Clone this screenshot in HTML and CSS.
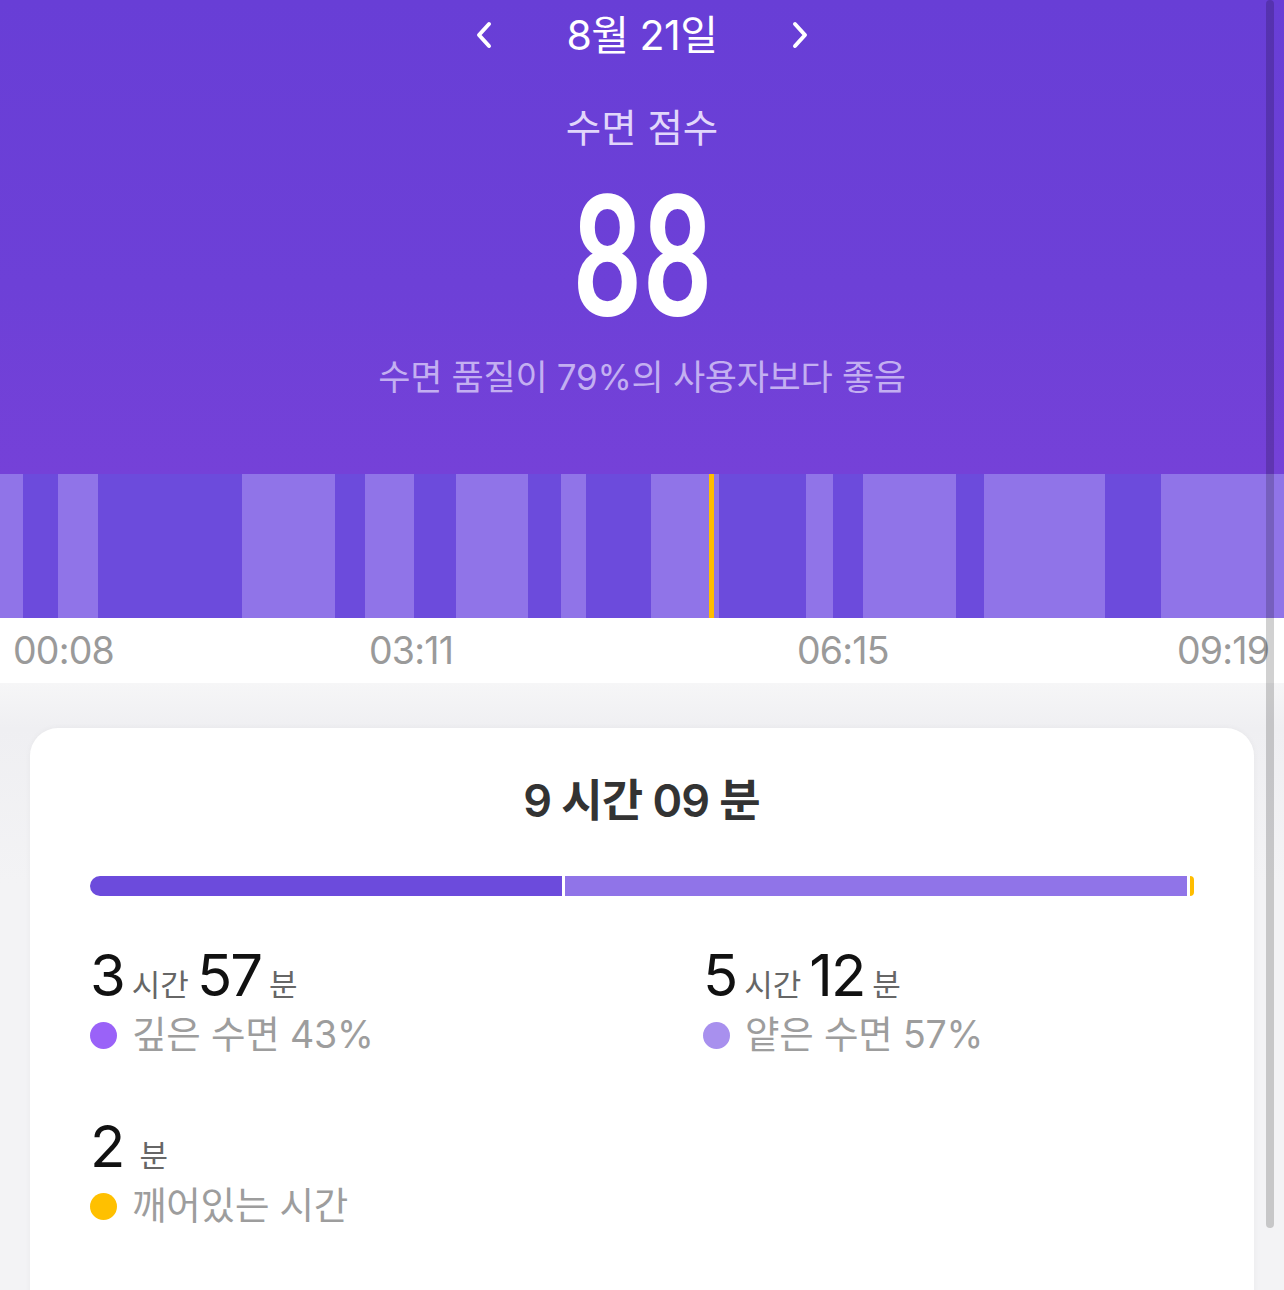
FILE: index.html
```html
<!DOCTYPE html>
<html lang="ko">
<head>
<meta charset="utf-8">
<title>수면</title>
<link rel="stylesheet" href="styles.css">
</head>
<body>
<div class="page">
  <header class="hero">
    <nav class="datebar">
      <svg class="chev" viewBox="0 0 16 28" width="16" height="28"><polyline points="13,3 3,14 13,25" /></svg>
      <span class="date">8월 21일</span>
      <svg class="chev" viewBox="0 0 16 28" width="16" height="28"><polyline points="3,3 13,14 3,25" /></svg>
    </nav>
    <div class="score-label">수면 점수</div>
    <div class="score"><span class="score-num">88</span></div>
    <div class="score-sub">수면 품질이 79%의 사용자보다 좋음</div>
  </header>

  <div class="strip">
    <span class="seg light" style="width:23px"></span>
    <span class="seg deep" style="width:35px"></span>
    <span class="seg light" style="width:40px"></span>
    <span class="seg deep" style="width:144px"></span>
    <span class="seg light" style="width:93px"></span>
    <span class="seg deep" style="width:30px"></span>
    <span class="seg light" style="width:49px"></span>
    <span class="seg deep" style="width:42px"></span>
    <span class="seg light" style="width:72px"></span>
    <span class="seg deep" style="width:33px"></span>
    <span class="seg light" style="width:25px"></span>
    <span class="seg deep" style="width:65px"></span>
    <span class="seg light" style="width:58px"></span>
    <span class="seg awake" style="width:5px"></span>
    <span class="seg light" style="width:5px"></span>
    <span class="seg deep" style="width:87px"></span>
    <span class="seg light" style="width:27px"></span>
    <span class="seg deep" style="width:30px"></span>
    <span class="seg light" style="width:93px"></span>
    <span class="seg deep" style="width:28px"></span>
    <span class="seg light" style="width:121px"></span>
    <span class="seg deep" style="width:56px"></span>
    <span class="seg light" style="width:123px"></span>
  </div>

  <div class="times">
    <span class="time t1">00:08</span>
    <span class="time t2">03:11</span>
    <span class="time t3">06:15</span>
    <span class="time t4">09:19</span>
  </div>

  <main class="lower">
    <section class="card">
      <h2 class="total"><span class="tn">9</span> 시간 <span class="tn">09</span> 분</h2>
      <div class="bar">
        <span class="bar-deep" style="width:472px"></span>
        <span class="bar-light" style="width:622px"></span>
        <span class="bar-awake" style="width:4px"></span>
      </div>
      <div class="stats">
        <div class="stat">
          <div class="amount"><span class="num">3</span><span class="unit">시간</span><span class="num">57</span><span class="unit">분</span></div>
          <div class="legend"><span class="dot dot-deep"></span>깊은 수면 43%</div>
        </div>
        <div class="stat">
          <div class="amount"><span class="num">5</span><span class="unit">시간</span><span class="num">12</span><span class="unit">분</span></div>
          <div class="legend"><span class="dot dot-light"></span>얕은 수면 57%</div>
        </div>
        <div class="stat">
          <div class="amount"><span class="num">2</span><span class="unit unit-wide">분</span></div>
          <div class="legend"><span class="dot dot-awake"></span>깨어있는 시간</div>
        </div>
      </div>
    </section>
  </main>
  <div class="scrollbar"></div>
</div>
</body>
</html>
```

FILE: styles.css
```css
* { box-sizing: border-box; }
html, body { margin: 0; padding: 0; }
body {
  font-family: "Inter", "Noto Sans CJK KR", sans-serif;
  background: #f4f4f6;
  width: 1284px;
  height: 1290px;
  overflow: hidden;
}
.page { position: relative; width: 1284px; }

.hero {
  background: linear-gradient(180deg, #683ed6 0%, #6d40d7 60%, #7541d8 100%);
  padding-bottom: 72px;
  color: #fff;
  text-align: center;
}
.datebar {
  height: 70px;
  display: flex;
  align-items: center;
  justify-content: center;
}
.chev { fill: none; stroke: #fff; stroke-width: 4; stroke-linecap: round; stroke-linejoin: round; }
.date {
  font-family: "Inter", "Noto Sans CJK KR", sans-serif;
  font-size: 41px;
  width: 300px;
  line-height: 70px;
  letter-spacing: -0.5px;
}
.score-label {
  margin-top: 30px;
  font-family: "Noto Sans CJK KR", sans-serif;
  font-size: 38.5px;
  line-height: 50px;
  color: #e1d6fb;
}
.score {
  margin-top: 22px;
  height: 170px;
  line-height: 170px;
}
.score-num {
  display: inline-block;
  font-family: "Roboto", sans-serif;
  font-weight: 500;
  font-size: 169px;
  line-height: 170px;
  transform: scaleX(0.74);
  letter-spacing: -1px;
}
.score-sub {
  margin-top: 10px;
  font-family: "Inter", "Noto Sans CJK KR", sans-serif;
  font-size: 35px;
  line-height: 50px;
  color: #c3aff1;
  letter-spacing: -0.3px;
}

.strip {
  display: flex;
  height: 144px;
}
.seg { display: block; height: 100%; flex: none; }
.seg.light { background: #9074e8; }
.seg.deep { background: #6c4bdc; }
.seg.awake { background: #ffbd00; }

.times {
  display: flex;
  height: 65px;
  background: #fff;
  padding-left: 13px;
  align-items: center;
}
.time {
  font-family: "Inter", sans-serif;
  font-size: 37.5px;
  color: #9a9a9a;
  letter-spacing: -0.8px;
}
.t1 { width: 356px; }
.t2 { width: 428px; }
.t3 { width: 380px; }

.lower {
  padding: 45px 30px 0 30px;
  background: linear-gradient(180deg, #f6f6f7 0px, #efeff2 45px, #f3f3f5 200px);
}
.card {
  background: #fff;
  border-radius: 28px;
  box-shadow: 0 0 6px rgba(0,0,0,0.04);
  padding: 44px 61px 0 60px;
  min-height: 620px;
}
.total {
  margin: 0;
  text-align: center;
  font-family: "Inter", "Noto Sans CJK KR", sans-serif;
  font-size: 45px;
  font-weight: 600;
  line-height: 58px;
  color: #333;
  letter-spacing: -1px;
}
.total .tn { font-weight: 600; }

.bar {
  margin-top: 46px;
  display: flex;
  gap: 3px;
  height: 20px;
}
.bar span { display: block; height: 100%; flex: none; }
.bar-deep { background: #6c4bdc; border-radius: 10px 0 0 10px; }
.bar-light { background: #9074e8; }
.bar-awake { background: #ffbd00; border-radius: 0 10px 10px 0; }

.stats {
  margin-top: 48px;
  display: grid;
  grid-template-columns: 613px 1fr;
  row-gap: 55px;
}
.amount {
  display: flex;
  align-items: baseline;
  height: 62px;
}
.num {
  font-family: "Inter", sans-serif;
  font-size: 58px;
  line-height: 62px;
  color: #111;
  letter-spacing: -2px;
}
.unit {
  font-family: "Noto Sans CJK KR", sans-serif;
  font-size: 31px;
  color: #666;
  margin: 0 8px 0 8px;
}
.unit-wide { margin-left: 16px; }
.legend {
  margin-top: 4px;
  display: flex;
  align-items: center;
  font-family: "Inter", "Noto Sans CJK KR", sans-serif;
  font-size: 37.5px;
  line-height: 50px;
  color: #9d9d9d;
  letter-spacing: -0.2px;
}
.dot {
  width: 27px;
  height: 27px;
  border-radius: 50%;
  margin-right: 15px;
  flex: none;
}
.dot-deep { background: #9a62f8; }
.dot-light { background: #a890ee; }
.dot-awake { background: #ffc000; }

.scrollbar {
  position: absolute;
  top: 0;
  right: 10px;
  width: 8px;
  height: 1228px;
  border-radius: 4px;
  background: rgba(0,0,0,0.18);
}
```
